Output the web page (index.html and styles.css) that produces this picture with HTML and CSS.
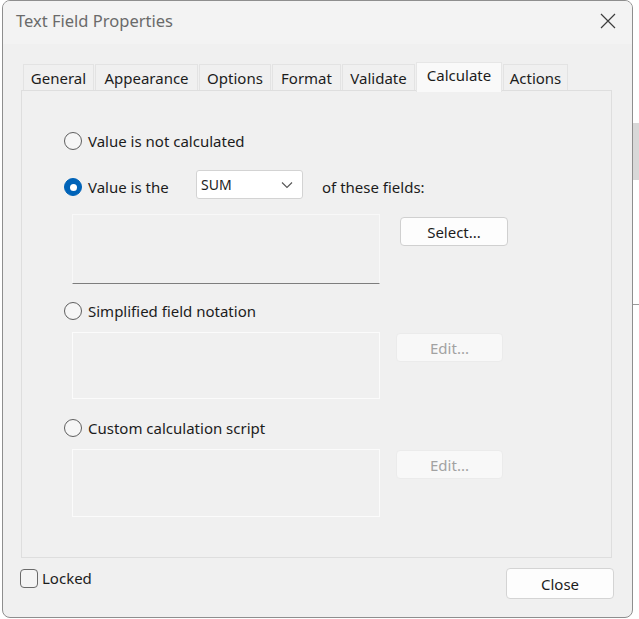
FILE: index.html
```html
<!DOCTYPE html>
<html>
<head>
<meta charset="utf-8">
<link rel="stylesheet" href="styles.css">
</head>
<body>
<div class="screen">
  <div class="dialog">
    <div class="titlebar">
      <span class="title">Text Field Properties</span>
      <svg class="close-x" width="16" height="16" viewBox="0 0 16 16"><path d="M1 1L15 15M15 1L1 15" stroke="#3c3c3c" stroke-width="1.2" fill="none"/></svg>
    </div>
    <div class="content">
      <div class="tabs">
        <div class="tab t-general">General</div>
        <div class="tab t-appearance">Appearance</div>
        <div class="tab t-options">Options</div>
        <div class="tab t-format">Format</div>
        <div class="tab t-validate">Validate</div>
        <div class="tab t-calculate active">Calculate</div>
        <div class="tab t-actions">Actions</div>
      </div>
      <div class="panel">
        <div class="radio-row row1"><span class="radio"></span><span class="lbl">Value is not calculated</span></div>
        <div class="radio-row row2">
          <span class="radio checked"></span><span class="lbl lbl-fixed">Value is the</span>
          <div class="select"><span>SUM</span><svg width="12" height="8" viewBox="0 0 12 8"><path d="M1 1.5L6 6.5L11 1.5" stroke="#555" stroke-width="1.1" fill="none"/></svg></div>
          <span class="lbl">of these fields:</span>
        </div>
        <div class="box-row brow1"><div class="box box-sunk"></div><div class="btn btn-select">Select...</div></div>
        <div class="radio-row row3"><span class="radio"></span><span class="lbl">Simplified field notation</span></div>
        <div class="box-row brow2"><div class="box"></div><div class="btn disabled">Edit...</div></div>
        <div class="radio-row row4"><span class="radio"></span><span class="lbl">Custom calculation script</span></div>
        <div class="box-row brow3"><div class="box"></div><div class="btn disabled">Edit...</div></div>
      </div>
      <div class="footer">
        <div class="check-row"><span class="checkbox"></span><span class="lbl">Locked</span></div>
        <div class="btn btn-close">Close</div>
      </div>
    </div>
  </div>
  <div class="bg-right">
    <span class="band"></span>
    <span class="line"></span>
  </div>
</div>
</body>
</html>
```

FILE: styles.css
```css
html, body {
  margin: 0;
  padding: 0;
  background: #ffffff;
  font-family: "Noto Sans", "Open Sans", sans-serif;
  color: #1c1c1c;
}
.screen {
  width: 639px;
  height: 619px;
  display: flex;
  overflow: hidden;
  position: relative;
}
.dialog {
  margin-left: 2px;
  width: 631px;
  height: 618px;
  box-sizing: border-box;
  border: 1px solid #8e8e8e;
  border-radius: 8px;
  background: #f0f0f0;
  display: flex;
  flex-direction: column;
  overflow: hidden;
  flex: none;
}
.titlebar {
  height: 43px;
  box-sizing: border-box;
  flex: none;
  background: #f3f3f3;
  display: flex;
  align-items: center;
  justify-content: space-between;
  padding: 0 16px 5px 13px;
}
.title {
  font-size: 16.5px;
  color: #6a6a6a;
}
.close-x {
  display: block;
  margin-top: 2px;
}
.content {
  flex: 1;
  display: flex;
  flex-direction: column;
  padding: 18px 20px 0 18px;
}
.tabs {
  display: flex;
  align-items: flex-end;
  padding-left: 2px;
  height: 28px;
  position: relative;
  z-index: 2;
}
.tab {
  height: 26px;
  box-sizing: border-box;
  border: 1px solid #e3e3e3;
  border-bottom: none;
  margin-right: 1px;
  font-size: 15px;
  display: flex;
  align-items: center;
  justify-content: center;
  background: #f0f0f0;
  flex: none;
}
.t-general { width: 71px; }
.t-appearance { width: 103px; }
.t-options { width: 72px; }
.t-format { width: 69px; }
.t-validate { width: 73px; }
.t-calculate { width: 86px; }
.t-actions { width: 65px; }
.tab.active {
  height: 30px;
  margin-bottom: -2px;
  background: #f9f9f9;
  border-color: #e6e6e6;
  align-items: flex-start;
  padding-top: 2px;
}
.panel {
  height: 468px;
  box-sizing: border-box;
  border: 1px solid #dedede;
  background: #f0f0f0;
  padding: 38px 0 0 42px;
  display: flex;
  flex-direction: column;
}
.radio-row {
  display: flex;
  align-items: center;
  height: 24px;
  flex: none;
}
.lbl {
  font-size: 15px;
  white-space: nowrap;
}
.radio {
  width: 18px;
  height: 18px;
  box-sizing: border-box;
  border: 1.2px solid #5f5f5f;
  border-radius: 50%;
  background: #f6f6f6;
  margin-right: 6px;
  flex: none;
  display: flex;
  align-items: center;
  justify-content: center;
}
.radio.checked {
  background: #0063b8;
  border-color: #0063b8;
}
.radio.checked::after {
  content: "";
  width: 7px;
  height: 7px;
  border-radius: 50%;
  background: #ffffff;
}
.row2 {
  margin-top: 19px;
  height: 30px;
}
.lbl-fixed {
  width: 108px;
}
.select {
  width: 107px;
  height: 29px;
  box-sizing: border-box;
  background: #ffffff;
  border: 1px solid #d3d3d3;
  border-radius: 3px;
  margin-bottom: 5px;
  margin-right: 19px;
  display: flex;
  align-items: center;
  justify-content: space-between;
  padding: 0 9px 0 4px;
  font-size: 14px;
}
.box-row {
  display: flex;
  align-items: flex-start;
  padding-left: 8px;
  flex: none;
}
.box {
  width: 308px;
  box-sizing: border-box;
  border: 1px solid #fbfbfb;
  background: #f0f0f0;
}
.brow1 { margin-top: 12px; }
.brow1 .box {
  height: 70px;
  border-color: #f8f8f8;
  border-bottom: 1px solid #7d7d7d;
}
.brow2 { margin-top: 9px; }
.brow2 .box { height: 67px; }
.brow3 { margin-top: 9px; }
.brow3 .box { height: 68px; }
.row3 { margin-top: 15px; }
.row4 { margin-top: 17px; }
.btn {
  box-sizing: border-box;
  width: 108px;
  height: 29px;
  background: #fdfdfd;
  border: 1px solid #d0d0d0;
  border-radius: 4px;
  display: flex;
  align-items: center;
  justify-content: center;
  font-size: 15px;
  flex: none;
}
.btn-select {
  margin-left: 20px;
  margin-top: 3px;
}
.btn.disabled {
  width: 107px;
  margin-left: 16px;
  margin-top: 1px;
  background: #f8f8f8;
  border-color: #ebebeb;
  color: #a2a2a2;
}
.footer {
  display: flex;
  justify-content: space-between;
  align-items: flex-start;
  padding: 10px 0 0 0;
  margin-right: -2px;
  margin-left: -1px;
}
.check-row {
  display: flex;
  align-items: center;
}
.checkbox {
  width: 18px;
  height: 19px;
  box-sizing: border-box;
  border: 1.5px solid #6a6a6a;
  border-radius: 4px;
  background: #f4f4f4;
  margin-right: 4px;
}
.btn-close {
  width: 108px;
  height: 31px;
  border-color: #d4d4d4;
}
.bg-right {
  flex: 1;
  position: relative;
  background: #ffffff;
}
.band {
  position: absolute;
  top: 123px;
  left: 0;
  right: 0;
  height: 57px;
  background: #d8d8d8;
}
.line {
  position: absolute;
  top: 304px;
  left: 0;
  right: 0;
  height: 1px;
  background: #9a9a9a;
}
```
